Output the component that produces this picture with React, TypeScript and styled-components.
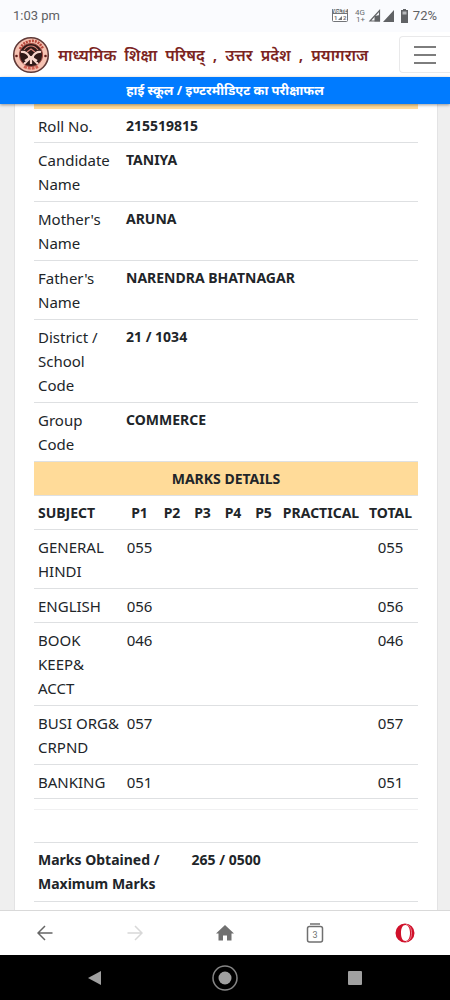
import React from "react";
import styled, { createGlobalStyle } from "styled-components";

const GlobalStyle = createGlobalStyle`
  * { box-sizing: border-box; }
  body {
    margin: 0;
    background: #efefef;
    color: #212529;
    font-family: "Noto Sans", "Open Sans", sans-serif;
    font-size: 15px;
    line-height: 24px;
  }
`;

const Screen = styled.div`
  display: flex;
  flex-direction: column;
  height: 100vh;
`;

const StatusBar = styled.div`
  display: flex;
  align-items: center;
  justify-content: space-between;
  height: 32px;
  padding: 0 13px;
  background: #fafbfe;
  color: #5f6164;
  font-family: Roboto, sans-serif;
  font-size: 13px;
`;

const StatusIcons = styled.div`
  display: flex;
  align-items: center;
  gap: 4px;
`;

const Header = styled.header`
  display: flex;
  align-items: center;
  justify-content: space-between;
  height: 45px;
  padding-left: 12px;
  background: #fff;
`;

const Brand = styled.a`
  display: flex;
  align-items: center;
  gap: 8px;
  color: #7b2421;
  text-decoration: none;
`;

const BrandName = styled.span`
  display: flex;
  gap: 8px;
  font-size: 16px;
  font-weight: 600;
  white-space: nowrap;
`;

const MenuButton = styled.button`
  display: flex;
  align-items: center;
  justify-content: center;
  width: 51px;
  height: 37px;
  padding: 0;
  border: 1px solid #e9e9ea;
  border-right: 0;
  border-radius: 4px 0 0 4px;
  background: #fff;
`;

const Banner = styled.h1`
  position: relative;
  margin: 0;
  height: 27px;
  background: #007bff;
  color: #fff;
  font-size: 13px;
  font-weight: 700;
  line-height: 26px;
  text-align: center;
  box-shadow: 0 1px 3px rgba(0, 0, 0, 0.4);
`;

const Main = styled.main`
  flex: 1;
  min-height: 0;
  overflow: hidden;
  padding: 0 13px 0 15px;
`;

const Sheet = styled.section`
  min-height: 100%;
  padding: 0 19px;
  background: #fff;
  box-shadow: 0 0 0 1px #e3e3e4;
`;

const CardTop = styled.div`
  height: 5px;
  background: #ffdb99;
`;

const Table = styled.table`
  width: 100%;
  table-layout: fixed;
  border-collapse: separate;
  border-spacing: 0;
`;

const Row = styled.tr<{ $lines?: 1 | 2 | 3 }>`
  height: ${({ $lines = 1 }) => ({ 1: 34, 2: 59, 3: 83 })[$lines]}px;
`;

const cell = `
  padding: 5px 0 4px 4px;
  border-bottom: 1px solid #dee0e2;
  vertical-align: top;
`;

const strong = `
  font-size: 14px;
  font-weight: 700;
`;

const Label = styled.th<{ $strong?: boolean }>`
  ${cell}
  font-weight: 400;
  text-align: left;
  ${({ $strong }) => $strong && strong}
`;

const Value = styled.td`
  ${cell}
  ${strong}
`;

const HeadCell = styled.th<{ $left?: boolean }>`
  ${cell}
  ${strong}
  padding-left: ${({ $left }) => ($left ? 4 : 0)}px;
  text-align: ${({ $left }) => ($left ? "left" : "center")};
`;

const TitleCell = styled.th`
  ${cell}
  ${strong}
  padding-left: 0;
  background: #ffdb99;
`;

const Mark = styled.td`
  ${cell}
  padding-left: 0;
  text-align: center;
`;

const Spacer = styled.div`
  height: 44px;
  padding-top: 10px;
  border-bottom: 1px solid #dee0e2;

  &::before {
    content: "";
    display: block;
    border-top: 1px solid #f0f0f1;
  }
`;

const Toolbar = styled.nav`
  display: grid;
  grid-template-columns: repeat(5, 1fr);
  height: 45px;
  border-top: 1px solid #d9d9d9;
  background: #fff;
`;

const SystemBar = styled.nav`
  display: grid;
  grid-template-columns: repeat(3, 1fr);
  height: 45px;
  padding: 0 30px;
  background: #000;
`;

const IconButton = styled.button`
  display: flex;
  align-items: center;
  justify-content: center;
  padding: 0;
  border: 0;
  background: transparent;
`;

const Emblem = () => (
  <svg width="38" height="38" viewBox="0 0 38 38" aria-hidden="true">
    <circle cx="19" cy="19" r="17.3" fill="#f6c2b2" stroke="#603a38" strokeWidth="1.6" />
    <path d="M8 13q3-7 11-8t12 8" fill="none" stroke="#b9483c" strokeWidth="2.600" strokeDasharray="2 1" />
    <path d="M12 30.500q7 4 14 0" fill="none" stroke="#cf6052" strokeWidth="2.600" strokeDasharray="3 1" />
    <circle cx="19" cy="19" r="11.6" fill="#2f1918" stroke="#a14a42" />
    <path d="M9 16q5-1 8 4v3l-5 5M29 16q-5-1-8 4v3l5 5M13 25l6-4 6 4M19 20v8" fill="none" stroke="#f7d6cc" strokeWidth="2.2" />
    <path d="M12 14q3-4 7-4t7 4M15 16l4-3 4 3" fill="none" stroke="#d88378" strokeWidth="1.2" />
    <circle cx="4.5" cy="20" r="1.3" fill="#5f1c19" />
    <circle cx="33.5" cy="20" r="1.3" fill="#5f1c19" />
  </svg>
);

const PhoneIcons = () => (
  <svg width="77" height="16" viewBox="0 0 77 16" role="img" aria-label="Signal and battery">
    <rect x="0.5" y="1.5" width="15" height="12" rx="1" fill="#fff" stroke="#727478" />
    <path d="M0 1h16v5H0z" fill="#727478" />
    <g fontFamily="Roboto, sans-serif" fontWeight="700">
      <text x="1" y="5.4" fontSize="5" fill="#fff">VoLTE</text>
      <text x="2" y="12.4" fontSize="6" fill="#727478">1</text>
      <text x="11" y="12.4" fontSize="6" fill="#727478">2</text>
    </g>
    <path d="M10 8v4H6z" fill="#727478" />
    <g fontFamily="Roboto, sans-serif" fontSize="8" fill="#696b6f">
      <text x="23" y="7">4G</text>
      <text x="24" y="14">1+</text>
    </g>
    <path d="M47.500 2.500v10.500H38z" fill="none" stroke="#606265" strokeWidth="1.200" />
    <path d="M48 7v6.500h-5.500V8zM62 2v12H51z" fill="#606265" />
    <path d="M71 1h3v1h2v13h-7V2h2z" fill="#606265" />
    <path d="M70.500 3.500h4v3h-4z" fill="#b8babd" />
  </svg>
);

const details: { label: string; value: string; lines: 1 | 2 | 3 }[] = [
  { label: "Roll No.", value: "215519815", lines: 1 },
  { label: "Candidate Name", value: "TANIYA", lines: 2 },
  { label: "Mother's Name", value: "ARUNA", lines: 2 },
  { label: "Father's Name", value: "NARENDRA BHATNAGAR", lines: 2 },
  { label: "District / School Code", value: "21 / 1034", lines: 3 },
  { label: "Group Code", value: "COMMERCE", lines: 2 },
];

const subjects: { name: string; mark: string; lines: 1 | 2 | 3 }[] = [
  { name: "GENERAL HINDI", mark: "055", lines: 2 },
  { name: "ENGLISH", mark: "056", lines: 1 },
  { name: "BOOK KEEP& ACCT", mark: "046", lines: 3 },
  { name: "BUSI ORG& CRPND", mark: "057", lines: 2 },
  { name: "BANKING", mark: "051", lines: 1 },
];

const columns = [88, 35, 30, 31, 30, 31, 84];
const papers = ["P1", "P2", "P3", "P4", "P5", "PRACTICAL", "TOTAL"];
const brandWords = ["माध्यमिक", "शिक्षा", "परिषद्", ",", "उत्तर", "प्रदेश", ",", "प्रयागराज"];

export default function App() {
  return (
    <Screen>
      <GlobalStyle />
      <StatusBar>
        <span>1:03 pm</span>
        <StatusIcons>
          <PhoneIcons />
          <span>72%</span>
        </StatusIcons>
      </StatusBar>
      <Header>
        <Brand href="#">
          <Emblem />
          <BrandName>
            {brandWords.map((word, i) => (
              <span key={i}>{word}</span>
            ))}
          </BrandName>
        </Brand>
        <MenuButton aria-label="Menu">
          <svg width="22" height="18" viewBox="0 0 22 18" stroke="#7d7d7d" strokeWidth="2">
            <path d="M0 1h22M0 9h22M0 17h22" />
          </svg>
        </MenuButton>
      </Header>
      <Banner>हाई स्कूल / इण्टरमीडिएट का परीक्षाफल</Banner>
      <Main>
        <Sheet>
          <CardTop />
          <Table>
            <colgroup>
              <col style={{ width: columns[0] }} />
              <col />
            </colgroup>
            <tbody>
              {details.map((d) => (
                <Row key={d.label} $lines={d.lines}>
                  <Label scope="row">{d.label}</Label>
                  <Value>{d.value}</Value>
                </Row>
              ))}
            </tbody>
          </Table>
          <Table>
            <colgroup>
              {columns.map((width, i) => (
                <col key={i} style={{ width }} />
              ))}
              <col />
            </colgroup>
            <thead>
              <Row>
                <TitleCell colSpan={8}>MARKS DETAILS</TitleCell>
              </Row>
              <Row>
                <HeadCell $left>SUBJECT</HeadCell>
                {papers.map((p) => (
                  <HeadCell key={p}>{p}</HeadCell>
                ))}
              </Row>
            </thead>
            <tbody>
              {subjects.map((s) => (
                <Row key={s.name} $lines={s.lines}>
                  <Label scope="row">{s.name}</Label>
                  <Mark>{s.mark}</Mark>
                  <Mark />
                  <Mark />
                  <Mark />
                  <Mark />
                  <Mark />
                  <Mark>{s.mark}</Mark>
                </Row>
              ))}
            </tbody>
          </Table>
          <Spacer />
          <Table>
            <colgroup>
              <col style={{ width: "40%" }} />
              <col />
            </colgroup>
            <tbody>
              <Row $lines={2}>
                <Label scope="row" $strong>Marks Obtained / Maximum Marks</Label>
                <Value>265 / 0500</Value>
              </Row>
            </tbody>
          </Table>
        </Sheet>
      </Main>
      <Toolbar aria-label="Browser">
        <IconButton aria-label="Back">
          <svg width="16" height="16" viewBox="0 0 16 16" fill="none" stroke="#666" strokeWidth="1.500">
            <path d="M15.500 8H1M8 1 1 8l7 7" />
          </svg>
        </IconButton>
        <IconButton aria-label="Forward">
          <svg width="16" height="16" viewBox="0 0 16 16" fill="none" stroke="#d8d8d8" strokeWidth="1.500">
            <path d="M.5 8H15M8 1l7 7-7 7" />
          </svg>
        </IconButton>
        <IconButton aria-label="Home">
          <svg width="18" height="16" viewBox="0 0 18 16" fill="#707070">
            <path d="M9 0 0 8.500h2.500V15.500H7v-5h4v5h4.500V8.500H18z" />
          </svg>
        </IconButton>
        <IconButton aria-label="Tabs">
          <svg width="18" height="20" viewBox="0 0 18 20" fill="none" stroke="#707070" strokeWidth="1.500">
            <path d="M4 1h10" />
            <rect x="1.500" y="3.500" width="15" height="15.500" rx="2" />
            <text x="9" y="14.500" fontSize="9" fontFamily="Roboto, sans-serif" textAnchor="middle" fill="#707070" stroke="none">3</text>
          </svg>
        </IconButton>
        <IconButton aria-label="Opera">
          <svg width="20" height="20" viewBox="0 0 20 20" fill="#d0112b" fillRule="evenodd">
            <path d="M10 .5a9.500 9.500 0 1 0 0 19 9.500 9.500 0 1 0 0-19zM10.500 2C13 2 15 5 15 10s-2 8-4.500 8C7.500 18 6 14.500 6 10s1.500-8 4.500-8z" />
            <path d="M11 1.500c4 1 5.500 4 5.500 8.500s-1.500 7.500-5.500 8.500" fill="none" stroke="#f4a5ae" strokeWidth=".7" />
          </svg>
        </IconButton>
      </Toolbar>
      <SystemBar aria-label="System">
        <IconButton aria-label="System back">
          <svg width="16" height="16" viewBox="0 0 16 16" fill="#a0a0a0">
            <path d="M14 1v14L1 8z" />
          </svg>
        </IconButton>
        <IconButton aria-label="System home">
          <svg width="26" height="26" viewBox="0 0 26 26">
            <circle cx="13" cy="13" r="12" fill="none" stroke="#858585" strokeWidth="1.500" />
            <circle cx="13" cy="13" r="6.500" fill="#a0a0a0" />
          </svg>
        </IconButton>
        <IconButton aria-label="Recent apps">
          <svg width="14" height="14" viewBox="0 0 14 14">
            <rect width="14" height="14" rx="1" fill="#a0a0a0" />
          </svg>
        </IconButton>
      </SystemBar>
    </Screen>
  );
}
